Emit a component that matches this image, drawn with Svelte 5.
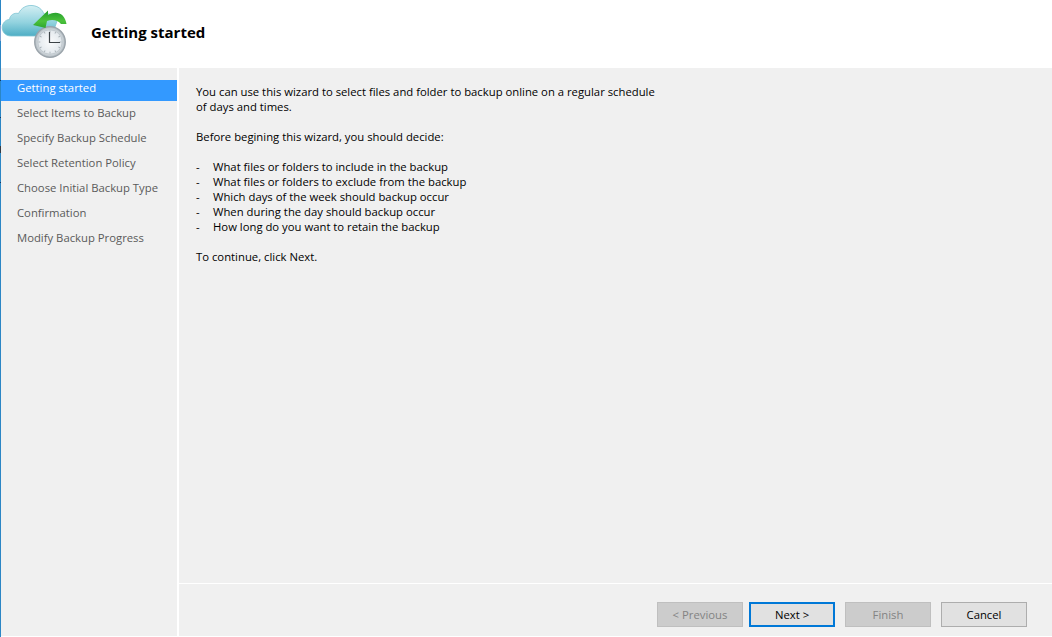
<script>
  const steps = ['Getting started','Select Items to Backup','Specify Backup Schedule','Select Retention Policy','Choose Initial Backup Type','Confirmation','Modify Backup Progress'];
  const bullets = ['What files or folders to include in the backup','What files or folders to exclude from the backup','Which days of the week should backup occur','When during the day should backup occur','How long do you want to retain the backup'];
  const ticks = Array.from({ length: 12 }, (_, i) => i * 30);
  const edge = [
    { top: 25, height: 16, color: '#7f9fd0' },
    { top: 80, height: 1, color: '#123a66' },
    { top: 117, height: 1, color: '#123a66' },
    { top: 146, height: 7, color: '#333b44' },
    { top: 182, height: 1, color: '#123a66' }
  ];
</script>

<div class="win">
  {#each edge as e}
    <i class="edge" style="top:{e.top}px;height:{e.height}px;background:{e.color}"></i>
  {/each}
  <header class="head">
    <svg class="logo" width="68" height="62" viewBox="1 0 68 62">
      <defs>
        <linearGradient id="cl" x1="0" y1="0" x2="0" y2="1"><stop offset="0" stop-color="#d4eff3"/><stop offset="0.55" stop-color="#93d3df"/><stop offset="1" stop-color="#4eaec5"/></linearGradient>
        <linearGradient id="ar" x1="0" y1="0" x2="0" y2="1"><stop offset="0" stop-color="#1f9a2a"/><stop offset="0.6" stop-color="#4cc23c"/><stop offset="1" stop-color="#2ea52e"/></linearGradient>
        <radialGradient id="fc"><stop offset="0" stop-color="#fafbfc"/><stop offset="0.7" stop-color="#e6ebef"/><stop offset="0.84" stop-color="#cdd4d9"/><stop offset="1" stop-color="#aab3b9"/></radialGradient>
      </defs>
      <path d="M11 36C5 36 2.2 31.5 2.2 27.5S5.5 19.5 9.5 19.5C10 15 14 12.5 18.5 13.5 21 8 26.5 5 32 5.5 38 6 42 9 44 14 49 13 55 15 57 21L52 36z" fill="url(#cl)" stroke="#7fc4d3" stroke-width=".8"/>
      <circle cx="50" cy="42" r="15.3" fill="url(#fc)" stroke="#9aa3aa" stroke-width="1.3"/>
      <circle cx="50" cy="42" r="12.3" fill="none" stroke="#b8c0c6" stroke-width=".7"/>
      {#each ticks as t}
        <line x1="50" y1="30.5" x2="50" y2="32.3" stroke="#a8b1b7" stroke-width=".9" transform="rotate({t} 50 42)" />
      {/each}
      <path d="M49.5 32v10.5H60" fill="none" stroke="#3c4246" stroke-width="1.2"/>
      <path d="M33 25 48 10.5V15C56 10 65 13 66.5 24L61 24C58 20 52 19 47 21L45.5 28z" fill="url(#ar)"/>
    </svg>
    <h1>Getting started</h1>
  </header>
  <div class="main">
    <nav class="side">
      {#each steps as s, i}
        <div class="step" class:on={i === 0}>{s}</div>
      {/each}
    </nav>
    <section class="pane">
      <div class="text">
        <p>You can use this wizard to select files and folder to backup online on a regular schedule<br />of days and times.</p>
        <p>Before begining this wizard, you should decide:</p>
        <ul>
          {#each bullets as b}<li><span>-</span>{b}</li>{/each}
        </ul>
        <p>To continue, click Next.</p>
      </div>
      <footer class="foot">
        <button disabled>&lt; Previous</button>
        <button class="primary">Next &gt;</button>
        <button disabled>Finish</button>
        <button>Cancel</button>
      </footer>
    </section>
  </div>
</div>

<style>
  :global(body) { margin: 0; background: #fff; }
  .win { position: relative; width: 1052px; height: 637px; box-sizing: border-box; border-left: 1px solid #2b86c5; display: flex; flex-direction: column; font-family: "Open Sans", "Noto Sans", sans-serif; font-size: 11.3px; color: #000; }
  .edge { position: absolute; left: -1px; width: 1px; }
  .head { height: 68px; flex: none; background: #fff; display: flex; align-items: flex-start; }
  .logo { flex: none; }
  h1 { margin: 22px 0 0 22px; font-size: 15px; font-weight: 700; color: #000; line-height: 20px; }
  .main { flex: 1; display: flex; min-height: 0; padding-bottom: 1px; }
  .side { width: 176px; margin-right: 2px; background: #f0f0f0; padding-top: 12px; flex: none; }
  .step { height: 25px; line-height: 16px; padding-left: 16px; color: #5a5a5a; box-sizing: border-box; }
  .step.on { height: 21px; margin-bottom: 4px; background: #3399ff; color: #fff; }
  .pane { flex: 1; background: #f0f0f0; display: flex; flex-direction: column; }
  .text { flex: 1; padding: 16px 0 0 17px; line-height: 15px; }
  p { margin: 0 0 15px; }
  ul { list-style: none; margin: 0 0 15px; padding: 0; }
  li span { display: inline-block; width: 17px; }
  .foot { flex: none; border-top: 1px solid #fff; display: flex; align-items: flex-start; justify-content: flex-end; gap: 10px; padding: 18px 25px 0 0; box-sizing: border-box; height: 53px; }
  button { width: 86px; height: 25px; box-sizing: border-box; background: #e1e1e1; border: 1px solid #adadad; font: inherit; color: #000; padding: 0; }
  button[disabled] { background: #cccccc; border-color: #bfbfbf; color: #838383; }
  .primary { border: 2px solid #0078d7; margin-left: -4px; }
</style>
